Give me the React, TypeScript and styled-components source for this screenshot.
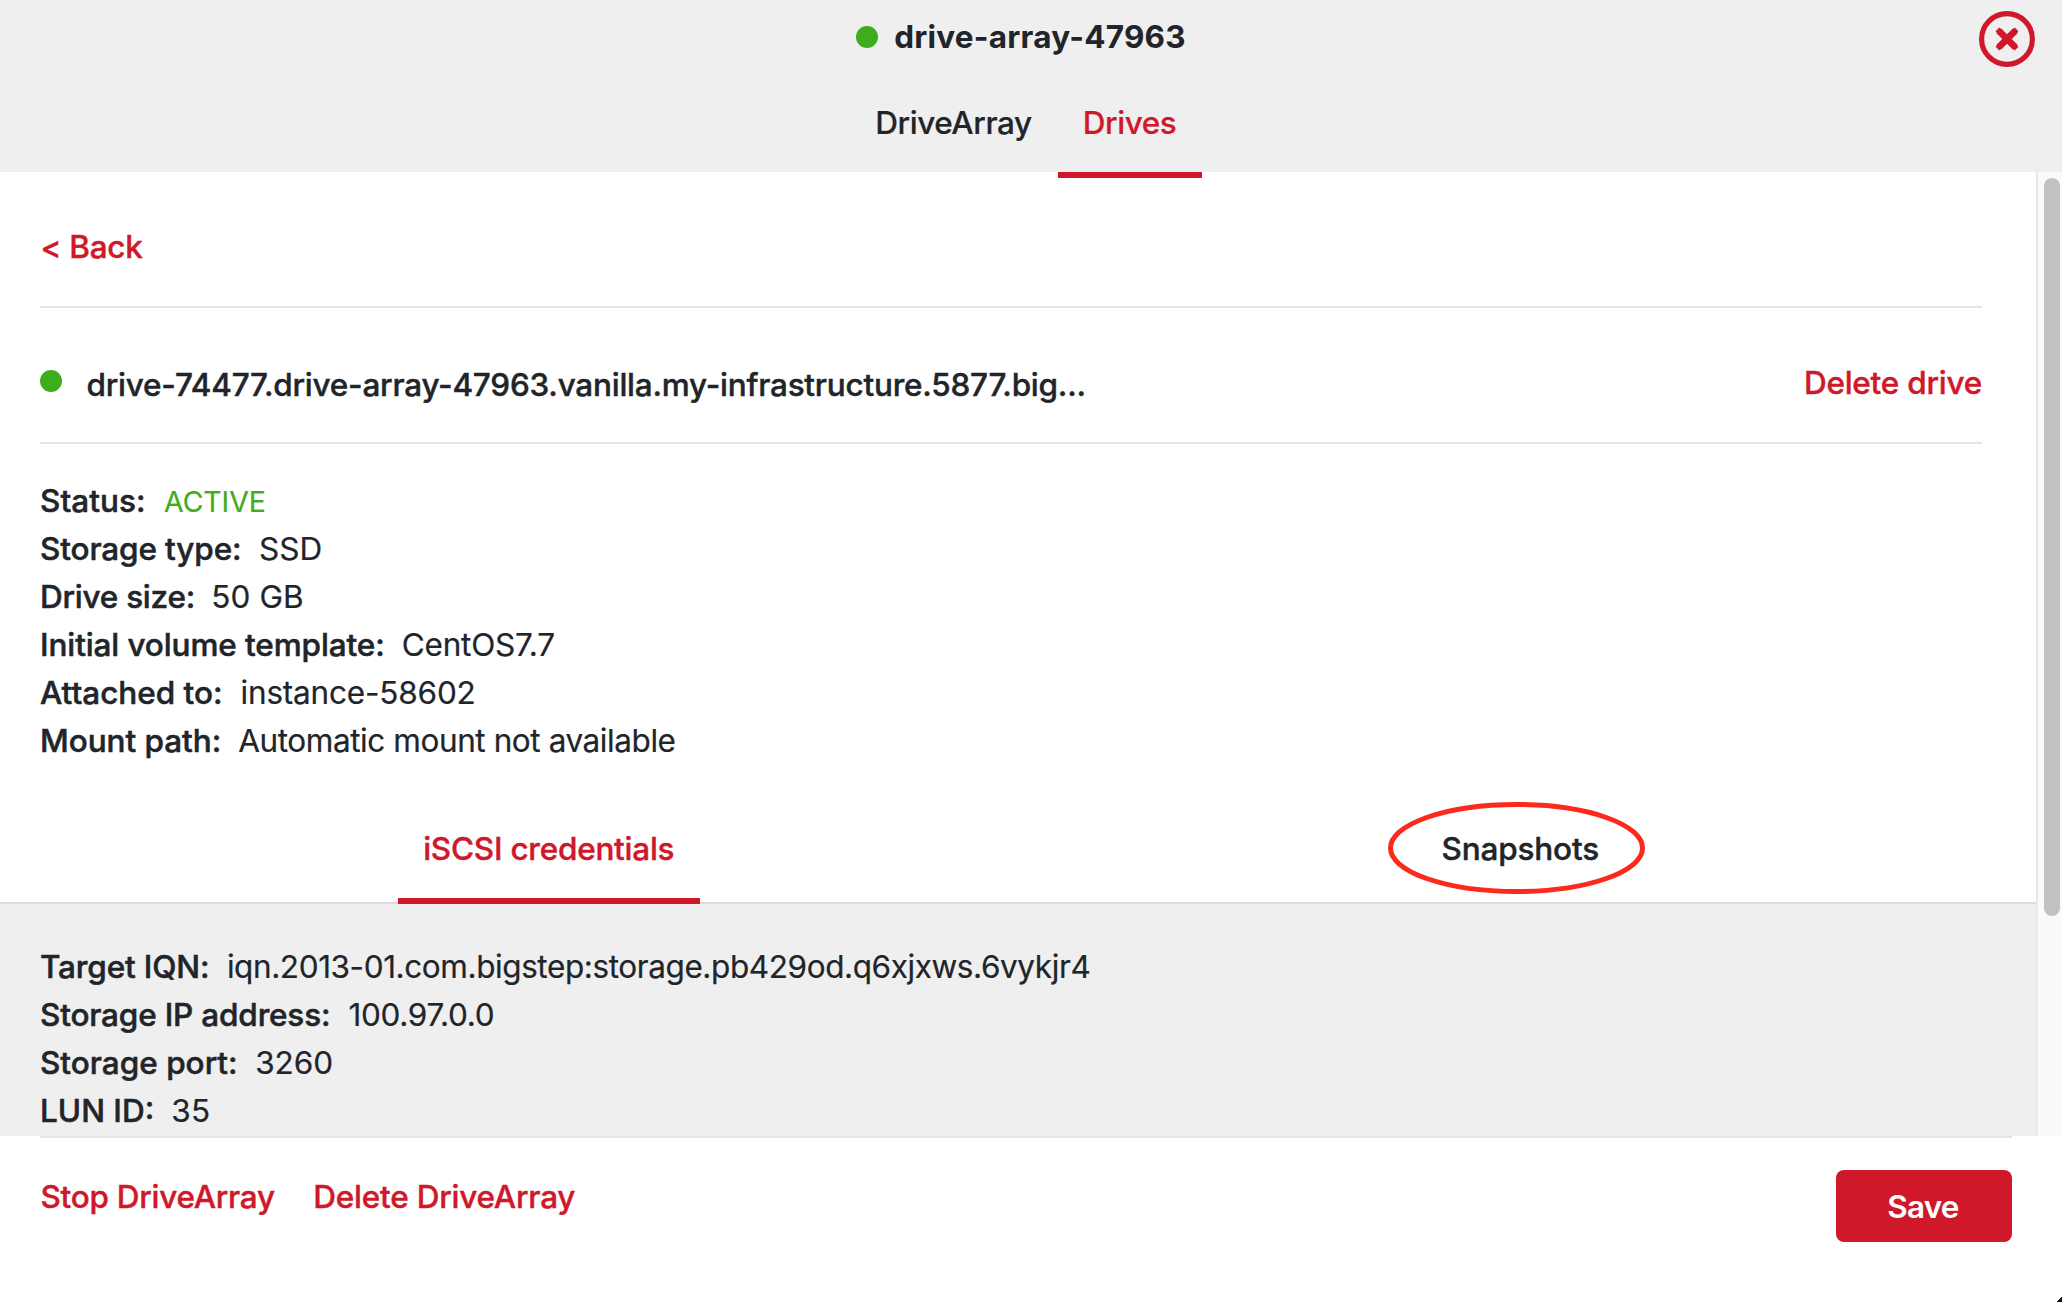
import React from 'react';
import styled, { createGlobalStyle, css } from 'styled-components';

const red = '#cf182a';
const green = '#3fac1c';
const ink = '#212529';
const grey = '#efefef';
const line = '#e4e4e4';

const GlobalStyle = createGlobalStyle`
  *, *::before, *::after { box-sizing: border-box; }
  body {
    margin: 0;
    overflow: hidden;
    background: #fff;
    color: ${ink};
    font-family: Inter, 'Liberation Sans', sans-serif;
    font-size: 31.5px;
    line-height: 48px;
  }
`;

const Panel = styled.div`
  position: relative;
  display: flex;
  flex-direction: column;
  width: 2062px;
  height: 1302px;
  overflow: hidden;
  background: #fff;
`;

const Text = styled.span<{ $tracking?: number; $weight?: number; $stroke?: number }>`
  font-weight: ${p => p.$weight ?? 500};
  letter-spacing: ${p => p.$tracking ?? 0}px;
  white-space: nowrap;
  -webkit-text-stroke: ${p => p.$stroke ?? 0.4}px currentColor;
`;

const Header = styled.header`
  position: relative;
  z-index: 1;
  flex: none;
  display: flex;
  flex-direction: column;
  height: 172px;
  padding-top: 13px;
  background: ${grey};
`;

const TitleRow = styled.div`
  display: flex;
  justify-content: center;
  gap: 16px;
  padding-right: 20px;
`;

const StatusDot = styled.i<{ $top: number }>`
  flex: none;
  width: 22px;
  height: 22px;
  margin-top: ${p => p.$top}px;
  border-radius: 50%;
  background: ${green};
`;

const HeaderTabs = styled.nav`
  display: flex;
  justify-content: center;
  flex: 1;
  padding: 38px 11px 0 0;
`;

const activeTab = css`
  color: ${red};
  &::after {
    content: '';
    position: absolute;
    left: 0;
    right: 0;
    bottom: var(--underline-offset);
    height: 6px;
    background: ${red};
  }
`;

const HeaderTab = styled.a<{ $width: number; $active?: boolean }>`
  --underline-offset: -6px;
  position: relative;
  width: ${p => p.$width}px;
  text-align: center;
  ${p => p.$active && activeTab}
`;

const CloseButton = styled.button`
  position: absolute;
  top: 11px;
  right: 27px;
  display: flex;
  width: 56px;
  height: 56px;
  padding: 0;
  border: 0;
  background: none;
`;

const Scroller = styled.div`
  flex: none;
  display: flex;
  height: 964px;
  overflow: hidden;
`;

const Content = styled.main`
  flex: 1;
  min-width: 0;
`;

const ScrollTrack = styled.div`
  display: flex;
  justify-content: center;
  width: 26px;
  padding: 6px 2px 0 6px;
  border-left: 2px solid #e8e8e8;
  background: #fafafa;
`;

const ScrollThumb = styled.div`
  width: 16px;
  height: 738px;
  border-radius: 8px;
  background: #c1c1c1;
`;

const BackRow = styled.div`
  height: 136px;
  margin: 0 54px 0 40px;
  padding: 51px 0 0 0.5px;
  border-bottom: 2px solid ${line};
  color: ${red};
`;

const DriveRow = styled.div`
  display: flex;
  height: 136px;
  margin: 0 54px 0 40px;
  padding-top: 51px;
  border-bottom: 2px solid ${line};
`;

const DriveName = styled.div`
  flex: 1;
  padding: 2px 0 0 24.5px;
`;

const DangerLink = styled.a`
  color: ${red};
`;

const Facts = styled.dl<{ $top: number }>`
  display: grid;
  grid-auto-rows: 48px;
  margin: 0;
  padding: ${p => p.$top}px 40px 0;
`;

const Fact = styled.div<{ $gap?: number }>`
  display: flex;
  gap: ${p => p.$gap ?? 17.5}px;
`;

const Value = styled(Text)`
  margin: 0;
`;

const Badge = styled.span`
  color: ${green};
  font-size: 28.4px;
  -webkit-text-stroke-color: ${green};
`;

const SubTabs = styled.nav`
  display: grid;
  grid-template-columns: 1fr 1fr;
  justify-items: center;
  height: 120px;
  margin-top: 19px;
  padding: 0 30px 0 63px;
  border-bottom: 2px solid #dcdcdc;
`;

const SubTab = styled.a<{ $active?: boolean }>`
  --underline-offset: -2px;
  position: relative;
  width: 302px;
  height: 118px;
  padding-top: 41px;
  text-align: center;
  ${p => p.$active && activeTab}
`;

const Ring = styled.svg`
  position: absolute;
  top: 18px;
  left: 19px;
  width: 257px;
  height: 92px;
`;

const Credentials = styled.section`
  height: 232px;
  background: ${grey};
`;

const Footer = styled.footer`
  display: flex;
  align-items: flex-start;
  margin: 0 50px 0 40px;
  border-top: 2px solid ${line};
`;

const FooterLinks = styled.div`
  display: flex;
  flex: 1;
  gap: 38.5px;
  padding: 35px 0 0 0.5px;
`;

const SaveButton = styled.button`
  width: 176px;
  height: 72px;
  margin-top: 32px;
  padding: 1px 2px 0 0;
  border: 0;
  border-radius: 8px;
  background: ${red};
  color: #fff;
  font: inherit;
`;

const WindowCorner = styled.i`
  position: absolute;
  right: 0;
  bottom: 0;
  width: 6px;
  height: 6px;
  background: linear-gradient(135deg, transparent 50%, #111218 52%);
`;

type Row = { label: string; value: string; lt: number; vt: number; gap?: number; badge?: boolean };

const driveFacts: Row[] = [
  { label: 'Status:', value: 'ACTIVE', lt: 0.04, vt: -0.05, gap: 18.5, badge: true },
  { label: 'Storage type:', value: 'SSD', lt: -0.13, vt: 0.04 },
  { label: 'Drive size:', value: '50 GB', lt: -0.25, vt: 0.1, gap: 16.3 },
  { label: 'Initial volume template:', value: 'CentOS7.7', lt: -0.11, vt: -0.2, gap: 17 },
  { label: 'Attached to:', value: 'instance-58602', lt: -0.02, vt: -0.19, gap: 18 },
  { label: 'Mount path:', value: 'Automatic mount not available', lt: -0.05, vt: -0.42, gap: 17 },
];

const iscsiFacts: Row[] = [
  { label: 'Target IQN:', value: 'iqn.2013-01.com.bigstep:storage.pb429od.q6xjxws.6vykjr4', lt: -0.15, vt: -0.407 },
  { label: 'Storage IP address:', value: '100.97.0.0', lt: -0.18, vt: -0.32, gap: 18.2 },
  { label: 'Storage port:', value: '3260', lt: 0, vt: -0.07 },
  { label: 'LUN ID:', value: '35', lt: 0, vt: 0.3, gap: 17 },
];

const FactList = ({ rows, top }: { rows: Row[]; top: number }) => (
  <Facts $top={top}>
    {rows.map(r => (
      <Fact key={r.label} $gap={r.gap}>
        <Text as="dt" $tracking={r.lt} $stroke={0.5}>{r.label}</Text>
        <Value as="dd" $weight={400} $tracking={r.vt} $stroke={0.2}>
          {r.badge ? <Badge>{r.value}</Badge> : r.value}
        </Value>
      </Fact>
    ))}
  </Facts>
);

export default function App() {
  return (
    <>
      <GlobalStyle />
      <Panel>
        <Header>
          <TitleRow>
            <StatusDot $top={13} />
            <Text $weight={700} $tracking={0.23} $stroke={0}>drive-array-47963</Text>
          </TitleRow>
          <HeaderTabs>
            <HeaderTab $width={208}><Text $tracking={-0.43} $stroke={0.2}>DriveArray</Text></HeaderTab>
            <HeaderTab $width={144} $active><Text $tracking={-0.45} $stroke={0.2}>Drives</Text></HeaderTab>
          </HeaderTabs>
          <CloseButton aria-label="Close">
            <svg width="56" height="56" viewBox="0 0 56 56" fill="none" stroke={red}>
              <circle cx="28" cy="28" r="25.4" strokeWidth="5.2" />
              <path d="M18.4 18.4 37.6 37.6M37.6 18.4 18.4 37.6" strokeWidth="5.2" />
              <path d="M19.6 19.6 36.4 36.4M36.4 19.6 19.6 36.4" strokeWidth="6.8" />
            </svg>
          </CloseButton>
        </Header>
        <Scroller>
          <Content>
            <BackRow><Text $tracking={-0.3}>&lt; Back</Text></BackRow>
            <DriveRow>
              <StatusDot $top={11} />
              <DriveName>
                <Text $tracking={-0.231}>drive-74477.drive-array-47963.vanilla.my-infrastructure.5877.big...</Text>
              </DriveName>
              <DangerLink><Text $tracking={-0.24}>Delete drive</Text></DangerLink>
            </DriveRow>
            <FactList rows={driveFacts} top={33} />
            <SubTabs>
              <SubTab $active><Text $tracking={-0.25}>iSCSI credentials</Text></SubTab>
              <SubTab>
                <Text $tracking={-0.17}>Snapshots</Text>
                <Ring viewBox="0 0 257 92" fill="none">
                  <ellipse cx="128.5" cy="46" rx="126" ry="43.5" stroke="#fc2a1c" strokeWidth="5" />
                </Ring>
              </SubTab>
            </SubTabs>
            <Credentials>
              <FactList rows={iscsiFacts} top={39} />
            </Credentials>
          </Content>
          <ScrollTrack><ScrollThumb /></ScrollTrack>
        </Scroller>
        <Footer>
          <FooterLinks>
            <DangerLink><Text $tracking={-0.27}>Stop DriveArray</Text></DangerLink>
            <DangerLink><Text $tracking={-0.22}>Delete DriveArray</Text></DangerLink>
          </FooterLinks>
          <SaveButton><Text $weight={600} $tracking={-0.8} $stroke={0}>Save</Text></SaveButton>
        </Footer>
        <WindowCorner />
      </Panel>
    </>
  );
}
